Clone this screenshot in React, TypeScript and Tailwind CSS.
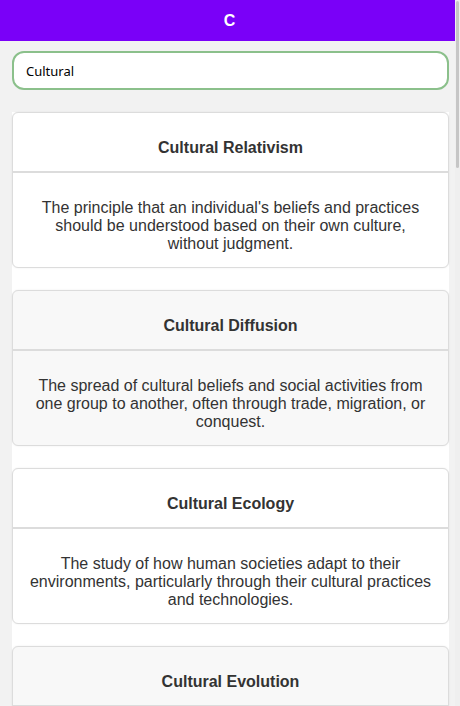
import React from "react";

const items = [
  {
    title: "Cultural Relativism",
    body: "The principle that an individual's beliefs and practices should be understood based on their own culture, without judgment.",
  },
  {
    title: "Cultural Diffusion",
    body: "The spread of cultural beliefs and social activities from one group to another, often through trade, migration, or conquest.",
  },
  {
    title: "Cultural Ecology",
    body: "The study of how human societies adapt to their environments, particularly through their cultural practices and technologies.",
  },
  {
    title: "Cultural Evolution",
    body: "The theory that cultures develop and change over time, progressing through stages of increasing complexity.",
  },
];

export default function App() {
  return (
    <div className="flex h-[706px] w-[460px] overflow-hidden bg-[#f2f2f2]">
      <div className="flex w-[455px] flex-col">
        <header className="flex h-[41px] shrink-0 items-center justify-center bg-[#7a00f8] pl-[4px] font-['Liberation_Sans',Arial,sans-serif] text-[16px] font-bold text-white">
          C
        </header>
        <div className="pl-3 pt-[10px]">
          <input
            readOnly
            value="Cultural"
            className="h-[39px] w-[437px] rounded-[12px] border-2 border-[#8bc08b] bg-white px-3 font-['Noto_Sans',sans-serif] text-[13px] text-black outline-none"
          />
        </div>
        <div className="ml-3 mt-[22px] flex w-[437px] flex-col gap-[22px] bg-white font-['Liberation_Sans',Arial,sans-serif] text-[#333]">
          {items.map((it, i) => (
            <div
              key={it.title}
              className={
                "shrink-0 rounded-[6px] border border-[#dcdcdc] shadow-[0_0_2px_rgba(0,0,0,0.08)] " +
                (i % 2 === 1 ? "bg-[#f8f8f8]" : "bg-white")
              }
            >
              <div className="border-b-2 border-[#dcdcdc] px-4 pb-[14px] pt-[26px] text-center text-[16px] font-bold leading-[18px]">
                {it.title}
              </div>
              <div className="px-4 pb-[14px] pt-[26px] text-center text-[16px] leading-[18px]">
                {it.body}
              </div>
            </div>
          ))}
        </div>
      </div>
      <div className="flex w-[5px] justify-center bg-[#efefef]">
        <div className="mt-[1px] h-[167px] w-[3px] rounded-full bg-[#c6c6c6]" />
      </div>
    </div>
  );
}
